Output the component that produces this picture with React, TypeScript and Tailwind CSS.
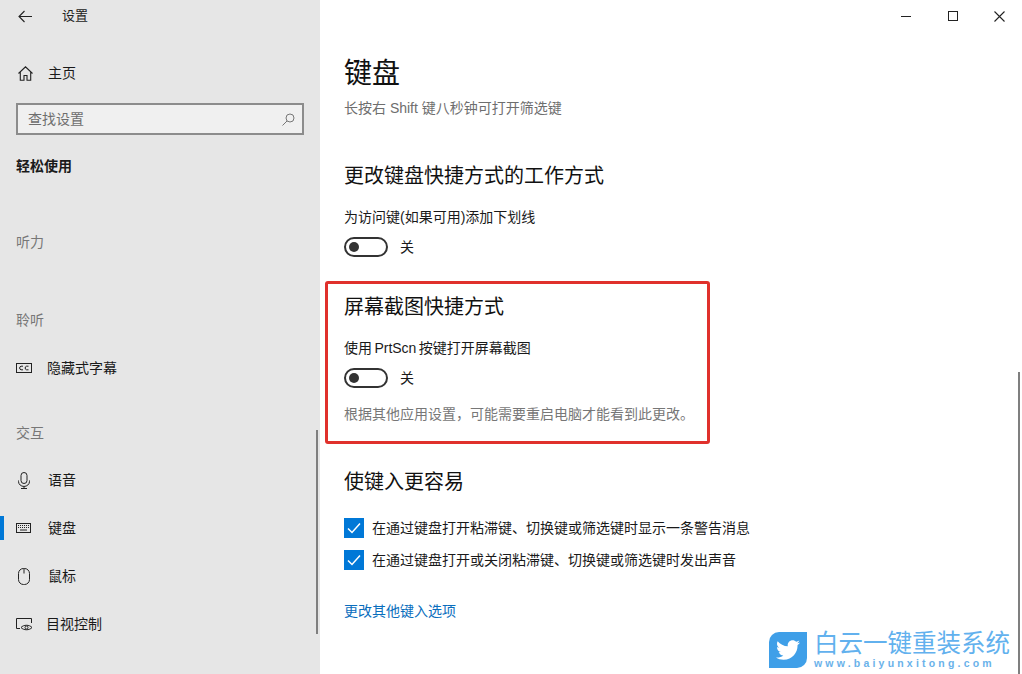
import { FaTwitter } from 'react-icons/fa';
import type { ReactNode } from 'react';

const FONT = "font-['Liberation_Sans','Noto_Sans_CJK_SC',sans-serif]";

function CcIcon() {
  return (
    <svg width="16" height="10" viewBox="0 0 16 10" fill="none" stroke="#222" strokeWidth="1">
      <rect x="0.5" y="0.5" width="15" height="9" />
      <path d="M7 3.2H5L3.8 4v2L5 6.8h2M12.5 3.2h-2L9.3 4v2l1.2.8h2" />
    </svg>
  );
}

function KeyboardIcon() {
  return (
    <svg width="15" height="10" viewBox="0 0 15 10" fill="none" stroke="#222" strokeWidth="1">
      <rect x="0.5" y="0.5" width="14" height="9" />
      <path d="M2 2.5h11M2 4.5h11" strokeDasharray="1 1" />
      <path d="M4 7h7" />
    </svg>
  );
}

function MicIcon() {
  return (
    <svg width="12" height="17" viewBox="0 0 12 17" fill="none" stroke="#222" strokeWidth="1">
      <rect x="3" y="0.5" width="6" height="11" rx="3" />
      <path d="M0.5 8.5v1a5 4.5 0 0 0 11 0v-1M6 14.5v2M3 16.5h6" />
    </svg>
  );
}

function MouseIcon() {
  return (
    <svg width="12" height="17" viewBox="0 0 12 17" fill="none" stroke="#222" strokeWidth="1">
      <rect x="0.5" y="0.5" width="11" height="16" rx="5" />
      <path d="M6 0.5v5" />
    </svg>
  );
}

function EyeControlIcon() {
  return (
    <svg width="17" height="13" viewBox="0 0 17 13" fill="none" stroke="#222" strokeWidth="1">
      <path d="M4 10.5H0.5V0.5H15.5V5" />
      <path d="M5 9.5c2.5-3 8.5-3 11 0c-2.5 3-8.5 3-11 0z" />
      <circle cx="10.5" cy="9.5" r="1.5" />
    </svg>
  );
}

function BackIcon() {
  return (
    <svg width="15" height="13" viewBox="0 0 15 13" fill="none" stroke="#222" strokeWidth="1.1">
      <path d="M14 6.5H1M6.5 1L1 6.5L6.5 12" />
    </svg>
  );
}

function HomeIcon() {
  return (
    <svg width="15" height="15" viewBox="0 0 15 15" fill="none" stroke="#222" strokeWidth="1.1">
      <path d="M0.5 7.5L7.5 0.8L14.5 7.5M2.3 6v8.3h3.7V9.5h3v4.8h3.7V6" />
    </svg>
  );
}

function SearchIcon() {
  return (
    <svg width="13" height="13" viewBox="0 0 13 13" fill="none" stroke="#777" strokeWidth="1">
      <circle cx="8" cy="5" r="4" />
      <path d="M5 8L0.5 12.5" />
    </svg>
  );
}

function NavItem({ icon, label, gap, active }: { icon: ReactNode; label: string; gap: string; active?: boolean }) {
  return (
    <div className="relative flex h-12 items-center pl-4">
      {active && <div className="absolute left-0 top-3 h-6 w-1 bg-[#0078d7]" />}
      <div className={`flex items-center ${gap}`}>{icon}</div>
      <span className="text-[14px] text-[#1a1a1a]">{label}</span>
    </div>
  );
}

function Sidebar() {
  return (
    <aside className="relative flex w-[320px] shrink-0 flex-col bg-[#e6e6e6]">
      <div className="flex h-8 items-center pl-[18px]">
        <BackIcon />
        <span className="ml-[29px] text-[13px] text-[#222]">设置</span>
      </div>
      <div className="mt-[17px] flex h-12 items-center pl-[18px]">
        <HomeIcon />
        <span className="ml-[15px] text-[14px] text-[#1a1a1a]">主页</span>
      </div>
      <div className="mx-4 mt-[6px] flex h-8 w-[288px] items-center justify-between border-2 border-[#8c8c8c] bg-[#f0f0f0] pl-[10px] pr-[7px]">
        <span className="text-[14px] text-[#6e6e6e]">查找设置</span>
        <SearchIcon />
      </div>
      <div className="mt-[21px] pl-4 text-[14px] font-bold leading-5 text-[#1a1a1a]">轻松使用</div>
      <div className="mt-[56px] pl-4 text-[14px] leading-5 text-[#777]">听力</div>
      <div className="mt-[58px] pl-4 text-[14px] leading-5 text-[#777]">聆听</div>
      <div className="mt-[14px]">
        <NavItem icon={<CcIcon />} label="隐藏式字幕" gap="w-[31px]" />
      </div>
      <div className="mt-[31px] pl-4 text-[14px] leading-5 text-[#777]">交互</div>
      <div className="mt-[13px]">
        <NavItem icon={<span className="ml-[2px]"><MicIcon /></span>} label="语音" gap="w-[32px]" />
        <NavItem icon={<KeyboardIcon />} label="键盘" gap="w-[32px]" active />
        <NavItem icon={<span className="ml-[2px]"><MouseIcon /></span>} label="鼠标" gap="w-[32px]" />
        <NavItem icon={<EyeControlIcon />} label="目视控制" gap="w-[30px]" />
      </div>
      <div className="absolute left-[316px] top-[430px] h-[204px] w-[2px] bg-[#7f7f7f]" />
    </aside>
  );
}

function Toggle() {
  return (
    <div className="flex h-5 items-center">
      <div className="flex h-5 w-[44px] items-center rounded-full border-2 border-[#333] pl-[3px]">
        <div className="h-[10px] w-[10px] rounded-full bg-[#333]" />
      </div>
      <span className="ml-[12px] text-[14px] text-[#1a1a1a]">关</span>
    </div>
  );
}

function CheckRow({ label }: { label: string }) {
  return (
    <div className="flex h-5 items-center">
      <div className="flex h-5 w-5 items-center justify-center bg-[#0078d7]">
        <svg width="14" height="12" viewBox="0 0 14 12" fill="none" stroke="#fff" strokeWidth="1.5">
          <path d="M1 6.5L5 10.5L13 1.5" />
        </svg>
      </div>
      <span className="ml-2 text-[14px] text-[#1a1a1a]">{label}</span>
    </div>
  );
}

function WindowButtons() {
  return (
    <div className="flex h-8 justify-end">
      <div className="flex w-[46px] items-center justify-center pr-[2px]">
        <div className="h-px w-[10px] bg-[#222]" />
      </div>
      <div className="flex w-[46px] items-center justify-center">
        <div className="h-[10px] w-[10px] border border-[#222]" />
      </div>
      <div className="flex w-[46px] items-center justify-center">
        <svg width="11" height="11" viewBox="0 0 11 11" stroke="#222" strokeWidth="1.1">
          <path d="M0.5 0.5L10.5 10.5M10.5 0.5L0.5 10.5" />
        </svg>
      </div>
    </div>
  );
}

function Logo() {
  return (
    <div className="absolute bottom-[5px] left-[769px] flex items-center">
      <div className="flex h-[36px] w-[38px] items-center justify-center rounded-br-[10px] rounded-tl-[10px] bg-[#3f9fe8]">
        <FaTwitter className="h-[24px] w-[24px] text-white" />
      </div>
      <div className="ml-[7px] flex flex-col">
        <span className="text-[24.5px] leading-[26px] text-[#62b1ee]">白云一键重装系统</span>
        <span className="text-[10.5px] font-bold leading-[12px] tracking-[3.2px] text-[#6ab2ea]">www.baiyunxitong.com</span>
      </div>
    </div>
  );
}

function Main() {
  return (
    <main className="relative flex-1 bg-white">
      <WindowButtons />
      <div className="pl-[24px]">
        <h1 className="mt-[21px] text-[28px] font-normal leading-[42px] text-[#111]">键盘</h1>
        <p className="mt-[3px] text-[14px] leading-5 text-[#6e6e6e]">长按右 Shift 键八秒钟可打开筛选键</p>
        <h2 className="mt-[43px] text-[20px] font-normal leading-[30px] text-[#111]">更改键盘快捷方式的工作方式</h2>
        <p className="mt-[16px] text-[14px] leading-5 text-[#1a1a1a]">为访问键(如果可用)添加下划线</p>
        <div className="mt-[10px]"><Toggle /></div>
      </div>
      <section className="ml-[5px] mt-[24px] h-[163px] w-[385px] rounded-[3px] border-[3px] border-[#e0312c] pl-[16px]">
        <h2 className="mt-[8px] text-[20px] font-normal leading-[30px] text-[#111]">屏幕截图快捷方式</h2>
        <p className="mt-[16px] text-[14px] leading-5 text-[#1a1a1a] [word-spacing:-1.5px]">使用 PrtScn 按键打开屏幕截图</p>
        <div className="mt-[10px]"><Toggle /></div>
        <p className="mt-[16px] text-[14px] leading-5 text-[#777]">根据其他应用设置，可能需要重启电脑才能看到此更改。</p>
      </section>
      <div className="pl-[24px]">
        <h2 className="mt-[23px] text-[20px] font-normal leading-[30px] text-[#111]">使键入更容易</h2>
        <div className="mt-[21px]"><CheckRow label="在通过键盘打开粘滞键、切换键或筛选键时显示一条警告消息" /></div>
        <div className="mt-[12px]"><CheckRow label="在通过键盘打开或关闭粘滞键、切换键或筛选键时发出声音" /></div>
        <p className="mt-[31px] text-[14px] leading-5 text-[#0a6ebd]">更改其他键入选项</p>
      </div>
      <div className="absolute left-[698px] top-[372px] h-[302px] w-[2px] bg-[#7f7f7f]" />
    </main>
  );
}

export default function App() {
  return (
    <div className={`relative flex h-[674px] w-[1022px] overflow-hidden ${FONT}`}>
      <Sidebar />
      <Main />
      <Logo />
    </div>
  );
}
